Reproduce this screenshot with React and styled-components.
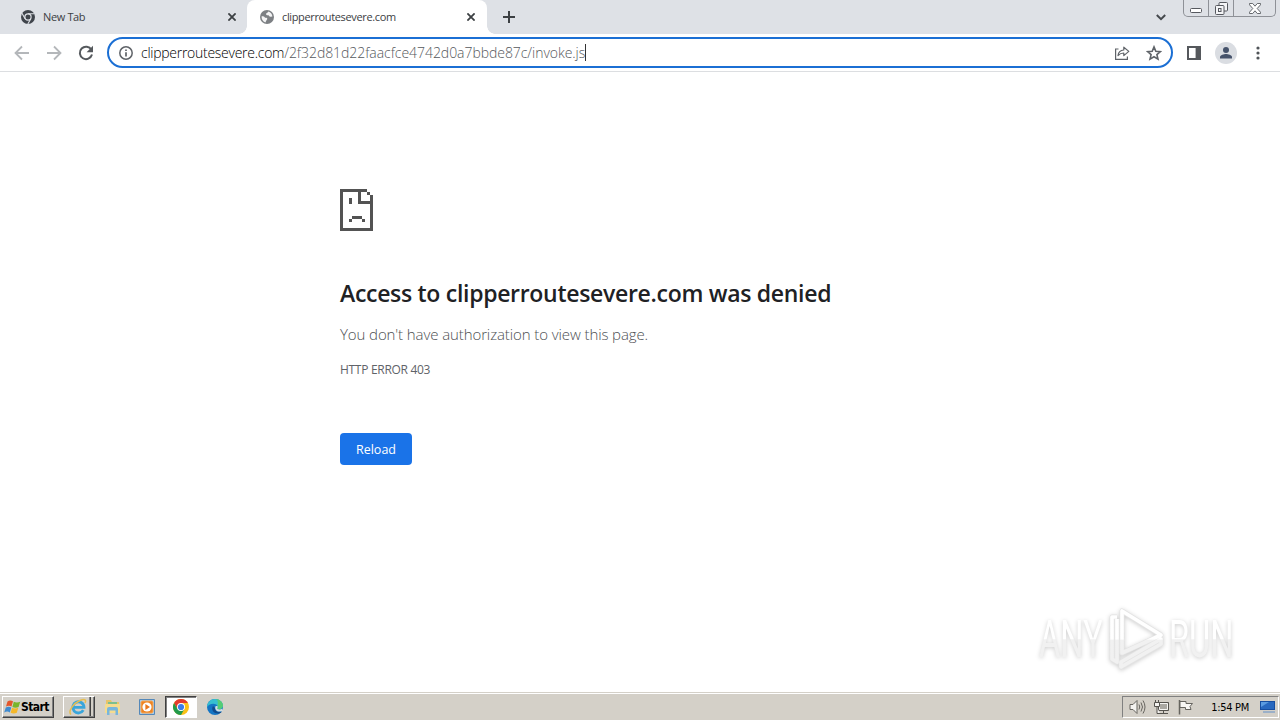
import React from 'react'
import styled, { createGlobalStyle } from 'styled-components'

const ui = `"Open Sans", "Noto Sans", sans-serif`

export default function App(){
  return(
    <Screen>
      <GlobalStyle />
      <TabStrip>
        <Tab>
          <ChromeMono />
          <TabTitle>New Tab</TabTitle>
          <CloseIcon />
        </Tab>
        <Tab $active>
          <GlobeIcon />
          <TabTitle>clipperroutesevere.com</TabTitle>
          <CloseIcon />
        </Tab>
        <NewTab>
          <svg width='12' height='12' viewBox='0 0 12 12' stroke='#3c4043' strokeWidth='2'><path d='M6 0v12M0 6h12' /></svg>
        </NewTab>
        <StripEnd>
          <svg width='10' height='7' viewBox='0 0 10 7' fill='none' stroke='#45494d' strokeWidth='2'><path d='M.8 1 5 5.2 9.2 1' /></svg>
          <WindowButtons />
        </StripEnd>
      </TabStrip>
      <Toolbar />
      <ErrorPage>
        <SadFile />
        <Title>Access to clipperroutesevere.com was denied</Title>
        <Summary>You don't have authorization to view this page.</Summary>
        <ErrorCode>HTTP ERROR 403</ErrorCode>
        <Reload>Reload</Reload>
        <Watermark />
      </ErrorPage>
      <Taskbar />
    </Screen>
  )
}

function Toolbar(){
  return(
    <ToolbarRow>
      <NavButtons>
        <svg width='16' height='16' viewBox='0 0 16 16' fill='none' stroke='#b4b7ba' strokeWidth='1.8'><path d='M15 8H2M8 1.5 1.5 8 8 14.5' /></svg>
        <svg width='16' height='16' viewBox='0 0 16 16' fill='none' stroke='#b4b7ba' strokeWidth='1.8'><path d='M1 8h13M8 1.5 14.5 8 8 14.5' /></svg>
        <svg width='16' height='16' viewBox='0 0 16 16' fill='none' stroke='#55595d' strokeWidth='2'>
          <path d='M13.4 4.8A6.2 6.2 0 1 0 14 9.6' />
          <path d='M15 .8v6.4H8.6z' fill='#55595d' stroke='none' />
        </svg>
      </NavButtons>
      <Omnibox>
        <svg width='14' height='14' viewBox='0 0 14 14' fill='none' stroke='#5f6368' strokeWidth='1.5'>
          <circle cx='7' cy='7' r='6.2' />
          <path d='M7 6.2v4.2M7 3.4v1.6' strokeWidth='1.7' />
        </svg>
        <Url><b>clipperroutesevere.com</b>/2f32d81d22faacfce4742d0a7bbde87c/invoke.js</Url>
        <Caret />
        <OmniboxActions>
          <svg width='16' height='14' viewBox='0 0 16 14' fill='none' stroke='#5f6368' strokeWidth='1.2'>
            <path d='M4.500 3H1.600v10.400h11.800V10.500' />
            <path d='M4 9.6C4.4 6 6.4 4.2 9.8 4V1.2l5 4.2-5 4.2V7C7.4 7 5.6 7.8 4 9.6z' strokeLinejoin='round' />
          </svg>
          <svg width='16' height='16' viewBox='0 0 16 16' fill='none' stroke='#5f6368' strokeWidth='1.6'>
            <path d='m8 1.9 1.8 4.3 4.6.4-3.5 3 1.1 4.6L8 11.8l-4 2.4 1.1-4.6-3.5-3 4.6-.4z' />
          </svg>
        </OmniboxActions>
      </Omnibox>
      <ToolbarActions>
        <svg width='14' height='14' viewBox='0 0 14 14'><path fill='#55585c' fillRule='evenodd' d='M0 0h14v14H0zM2 2v10h6.6V2z' /></svg>
        <Avatar>
          <svg width='12' height='12' viewBox='0 0 12 12' fill='#46536b'><circle cx='6' cy='3' r='3' /><path d='M0 11.6V10c0-2 4-3 6-3s6 1 6 3v1.6z' /></svg>
        </Avatar>
        <svg width='4' height='14' viewBox='0 0 4 14' fill='#505458'><circle cx='2' cy='2' r='1.6' /><circle cx='2' cy='7' r='1.6' /><circle cx='2' cy='12' r='1.6' /></svg>
      </ToolbarActions>
    </ToolbarRow>
  )
}

function ChromeMono(){
  return(
    <svg width='14' height='14' viewBox='0 0 14 14'>
      <circle cx='7' cy='7' r='7' fill='#3f444b' />
      <circle cx='7' cy='7' r='3.1' fill='#3f444b' stroke='#dee1e6' strokeWidth='1.2' />
      <path d='M7 3.7h6.4M4.1 8.7 1 3.2M9.8 8.8l-3 5.2' stroke='#dee1e6' strokeWidth='1.1' />
    </svg>
  )
}

function GlobeIcon(){
  return(
    <svg width='14' height='14' viewBox='0 0 14 14'>
      <circle cx='7' cy='7' r='7' fill='#7d8084' />
      <path d='M1.6 6.2c1.8 0 3 .4 3.4 1.6h1.600c1 .4.8 1.800 0 2.200l-1.200 2.400C2.8 11.6 1.3 9 1.6 6.2zM8.4 1.6c-.4 1.4-2 1-2.4 2.4 0 1 1.4 1.4 2.6 1.2.6 1.4 2 1.6 3.8 1.4C12.2 4 10.6 2.2 8.4 1.6z' fill='#f4f4f5' />
    </svg>
  )
}

function CloseIcon(){
  return <svg width='8' height='8' viewBox='0 0 8 8' stroke='#3c4043' strokeWidth='1.8'><path d='m.4.4 7.2 7.2M7.6.4.4 7.6' /></svg>
}

function WindowButtons(){
  return(
    <WindowGroup>
      <WindowButton $width='24px'>
        <svg width='12' height='5' viewBox='0 0 12 5'><rect x='.5' y='.5' width='11' height='4' rx='1' fill='#fff' stroke='#56595f' /></svg>
      </WindowButton>
      <WindowButton $width='25px'>
        <svg width='13' height='13' viewBox='0 0 13 13' fill='#f4f5f7' stroke='#56595f'>
          <rect x='4' y='.5' width='8.5' height='8.5' rx='1' />
          <rect x='.5' y='3.5' width='8.5' height='9' rx='1' />
          <rect x='3.5' y='6.5' width='2.5' height='3' />
        </svg>
      </WindowButton>
      <WindowButton $width='42px'>
        <svg width='12' height='11' viewBox='0 0 12 11'><path d='M.5.5h3.2L6 3.2 8.3.5h3.2v1.3L8.2 5.5l3.3 3.7v1.3H8.3L6 7.8 3.7 10.5H.5V9.2l3.3-3.7L.5 1.8z' fill='#fff' stroke='#56595f' strokeWidth='.9' /></svg>
      </WindowButton>
    </WindowGroup>
  )
}

function SadFile(){
  return(
    <svg width='33' height='42' viewBox='0 0 11 14' fill='#535353' shapeRendering='crispEdges'>
      <path d='M0 0h9v1H7v3h4v10H0zM1 1v12h9V5H6V1z' fillRule='evenodd' />
      <path d='M9 1h1v1H9zM10 2h1v3h-1zM3 3h1v2H3zM4 9h3.33v1H4zM3 10h1v1H3zM7.33 10h1v1h-1z' />
    </svg>
  )
}

function Watermark(){
  return(
    <WatermarkRow>
      <WatermarkWord>ANY</WatermarkWord>
      <svg width='62' height='64' viewBox='0 0 62 64' fill='none' strokeLinejoin='round'>
        <defs>
          <linearGradient id='fade' x1='0' y1='0' x2='0' y2='64' gradientUnits='userSpaceOnUse'>
            <stop offset='.5' stopColor='#fff' />
            <stop offset='.52' stopColor='#f1f1f1' />
          </linearGradient>
        </defs>
        <path d='M17 4v42L56 28zM12 10H7v42l5 3V12M16 55v5l40-23v-5z' stroke='#e4e4e4' strokeWidth='5' />
        <path d='M17 4v42L56 28zM12 10H7v42l5 3V12M16 55v5l40-23v-5z' stroke='url(#fade)' strokeWidth='3.6' />
      </svg>
      <WatermarkWord>RUN</WatermarkWord>
    </WatermarkRow>
  )
}

function Taskbar(){
  return(
    <TaskbarRow>
      <StartButton>
        <WindowsFlag />
        <span>Start</span>
      </StartButton>
      <StackedButton><IeIcon /></StackedButton>
      <TaskIcon><FolderIcon /></TaskIcon>
      <TaskIcon><PlayerIcon /></TaskIcon>
      <TaskIcon $pressed><ChromeIcon /></TaskIcon>
      <TaskIcon><EdgeIcon /></TaskIcon>
      <Tray>
        <svg width='17' height='16' viewBox='0 0 17 16' fill='none' stroke='#66645f'>
          <path d='M1 5.5h3L8 1.5v13l-4-4H1z' fill='#f4f3f0' />
          <path d='M10 5.5q1.5 2.5 0 5M12 3.5q3 4.5 0 9M14 1.5q4 6.5 0 13' />
        </svg>
        <svg width='17' height='16' viewBox='0 0 17 16' fill='none' stroke='#55534e'>
          <path d='M5.5 3.5h10v8h-10z' fill='#aaa8a2' />
          <path d='M6.5 4.5h8v6h-8z' stroke='#f5f5f2' />
          <path d='M7 14.5h8M10.5 12v2' />
          <path d='M1.5 3.5h5v4h-5zM2.5 1v2M5.5 1v2M4 8v6.5h3' fill='#f4f3f0' />
        </svg>
        <svg width='17' height='16' viewBox='0 0 17 16' stroke='#66645f'>
          <path d='M2.5 1v14.5' fill='none' strokeWidth='1.5' />
          <path d='M3 2.5h6v2h6.5L13 7.5l1 3H8.5v-2H3z' fill='#f8f7f4' />
        </svg>
        <Clock>1:54 PM</Clock>
        <svg width='16' height='14' viewBox='0 0 16 14'>
          <path d='M0 1h15v9H0z' fill='#174ea0' /><path d='M1 2h13v7H1z' fill='#2868bf' /><path d='M1 2h8L1 7z' fill='#5b9be0' />
          <path d='M3 11h12v2H3z' fill='#9bb0c8' />
        </svg>
      </Tray>
    </TaskbarRow>
  )
}

function WindowsFlag(){
  return(
    <svg width='17' height='16' viewBox='0 0 17 16'>
      <path d='M3.5 2.5Q6 .8 9 2.3L7.5 7.5Q5 6 2 7.5z' fill='#e4572c' />
      <path d='M9.8 2.7q3 1.5 6.4 0l-1.6 5.2q-3 1.5-6.2 0z' fill='#79b52c' />
      <path d='M1.8 8.4q3-1.5 5.5 0l-1.5 5q-2.5-1.6-5.6 0z' fill='#3f8bd0' />
      <path d='M8.1 8.8q3 1.5 6.2 0l-1.5 5q-3 1.6-6.2 0z' fill='#f5b82a' />
    </svg>
  )
}

function IeIcon(){
  return(
    <svg width='18' height='18' viewBox='0 0 18 18' fill='none'>
      <path d='M14.3 12.1A5.6 5.6 0 1 1 15 9.3H5' stroke='#39a5da' strokeWidth='2.8' />
      <path d='M2 16.5C-1.5 13 5 5 11 2.5c4-1.7 7-1.2 5 2.5' stroke='#e5bd50' strokeWidth='1.5' />
    </svg>
  )
}

function FolderIcon(){
  return(
    <svg width='16' height='17' viewBox='0 0 16 17'>
      <path d='M1 1h5l1 2h7v3H1z' fill='#e7c56a' />
      <path d='M3 3h9v3H3z' fill='#7dbf8e' />
      <path d='M0 5h15v9H0z' fill='#f5dc8f' />
      <path d='M2 16v-6q0-2 2-2h7q2 0 2 2v6h-2.5v-4.5h-6V16z' fill='#78b6dc' />
    </svg>
  )
}

function PlayerIcon(){
  return(
    <svg width='16' height='16' viewBox='0 0 16 16'>
      <path d='M.5.5h15v15H.5z' fill='#a6cbe8' stroke='#5488b9' />
      <path d='M3 2h10l1 1v10l-1 1H3l-1-1V3z' fill='#ee8422' stroke='#f3a85c' />
      <circle cx='8' cy='8' r='4.6' fill='#fff' />
      <path d='m6.4 5 4.6 3-4.6 3z' fill='#e8761c' />
    </svg>
  )
}

function ChromeIcon(){
  return(
    <svg width='16' height='16' viewBox='0 0 16 16'>
      <circle cx='8' cy='8' r='8' fill='#fbc116' />
      <path d='M1.07 4A8 8 0 0 1 14.93 4H8L4.54 10z' fill='#e33b2e' />
      <path d='M1.07 4A8 8 0 0 0 8 16l3.46-6H4.54z' fill='#229a4b' />
      <circle cx='8' cy='8' r='4' fill='#fff' /><circle cx='8' cy='8' r='3.1' fill='#3b7de8' />
    </svg>
  )
}

function EdgeIcon(){
  return(
    <svg width='16' height='16' viewBox='0 0 16 16'>
      <circle cx='8' cy='8' r='8' fill='#1475c4' />
      <path d='M0 8C.3 3.3 3.6 0 8 0c4.8 0 8 3.6 8 6.5S13 11 10.5 10c-1-.5.3-1 .2-2.3C10.5 4.5 3.5 3 0 8z' fill='#36bfd0' />
      <path d='M9 .1c4 .4 7 3.7 7 6.4S13 11 10.5 10c-1-.5.3-1 .2-2.3C10.4 6 12 2 9 .1z' fill='#55cc76' />
      <path d='M6 7c-2 3 0 7.5 5 7.5 1.5 0 3-.6 4-2-2 1-7 1-7-3.5z' fill='#114a8b' />
      <path d='M8.4 7.5c1-1 2.6-.4 2.3.6-.2 1-1 1.3-.2 1.9 1.4.8 3.5.5 4.7-.3L16 12l-3 .5c-3 .5-5.5-2-4.6-5z' fill='#d4dde0' />
    </svg>
  )
}

const GlobalStyle = createGlobalStyle`
  * { box-sizing: border-box; }
  body { margin: 0; overflow: hidden; background: #fff; }
  svg { display: block; flex: none; }
  `

const Screen = styled.div`
  width: 1280px;
  height: 720px;
  display: flex;
  flex-direction: column;
  font-family: ${ui};
  background: #fff;
  `

const TabStrip = styled.div`
  display: flex;
  height: 34px;
  flex: none;
  background: #dee1e6;
  padding-left: 7px;
  `

const Tab = styled.div`
  position: relative;
  display: flex;
  align-items: center;
  width: 240px;
  padding: ${p => p.$active ? '0 12px 0 13px' : '0 11px 0 14px'};
  border-radius: 8px 8px 0 0;
  background: ${p => p.$active ? '#fff' : 'transparent'};
  ${p => p.$active && `
    &::before, &::after {
      content: '';
      position: absolute;
      bottom: 0;
      width: 8px;
      height: 8px;
    }
    &::before { left: -8px; background: radial-gradient(circle at 0 0, transparent 7.5px, #fff 8px); }
    &::after { right: -8px; background: radial-gradient(circle at 100% 0, transparent 7.5px, #fff 8px); }
  `}
  `

const TabTitle = styled.span`
  flex: 1;
  margin-left: 8px;
  font-size: 11px;
  line-height: 16px;
  letter-spacing: -0.36px;
  color: #3c4043;
  white-space: nowrap;
  `

const NewTab = styled.div`
  display: flex;
  align-items: center;
  margin-left: 16px;
  `

const StripEnd = styled.div`
  display: flex;
  align-items: center;
  margin-left: auto;
  padding-right: 4px;
  gap: 17px;
  `

const WindowGroup = styled.div`
  display: flex;
  align-self: flex-start;
  height: 17px;
  border: 1px solid #8e9197;
  border-top: none;
  border-radius: 0 0 5px 5px;
  `

const WindowButton = styled.div`
  display: flex;
  align-items: center;
  justify-content: center;
  width: ${p => p.$width};
  & + & { border-left: 1px solid #8e9197; }
  &:first-child { padding-top: 5px; }
  `

const ToolbarRow = styled.div`
  display: flex;
  align-items: center;
  height: 38px;
  flex: none;
  padding-left: 14px;
  border-bottom: 1px solid #dcdee1;
  `

const NavButtons = styled.div`
  display: flex;
  flex: none;
  gap: 16px;
  width: 93px;
  `

const Omnibox = styled.div`
  display: flex;
  align-items: center;
  width: 1066px;
  flex: none;
  height: 31px;
  padding: 0 9px 0 10px;
  border: 2px solid #1b6fd4;
  border-radius: 16px;
  `

const Url = styled.span`
  margin-left: 8px;
  font-size: 14px;
  font-weight: 300;
  line-height: 20px;
  letter-spacing: -0.05px;
  color: #55585c;
  white-space: nowrap;
  b { font-weight: 300; letter-spacing: -0.27px; color: #000; }
  `

const Caret = styled.i`
  width: 1px;
  height: 17px;
  background: #333;
  `

const OmniboxActions = styled.div`
  display: flex;
  align-items: center;
  gap: 16px;
  margin-left: auto;
  `

const ToolbarActions = styled.div`
  display: flex;
  align-items: center;
  flex: none;
  margin-left: 14px;
  & > :last-child { margin-left: 19px; }
  `

const Avatar = styled.div`
  display: flex;
  align-items: center;
  justify-content: center;
  width: 22px;
  height: 22px;
  margin-left: 14px;
  border-radius: 50%;
  background: #dadde2;
  `

const ErrorPage = styled.main`
  position: relative;
  flex: 1;
  padding: 117px 0 0 340px;
  white-space: nowrap;
  `

const Title = styled.h1`
  margin: 46px 0 0;
  font-size: 23px;
  font-weight: 600;
  line-height: 32px;
  letter-spacing: -0.3px;
  color: #202124;
  `

const Summary = styled.p`
  margin: 15px 0 0;
  font-size: 15px;
  font-weight: 300;
  line-height: 20px;
  letter-spacing: -0.1px;
  color: #4d5053;
  `

const ErrorCode = styled.p`
  margin: 17px 0 0;
  font-size: 12px;
  line-height: 18px;
  letter-spacing: -0.3px;
  color: #5f6368;
  `

const Reload = styled.button`
  display: block;
  width: 72px;
  height: 32px;
  margin-top: 54px;
  padding: 0;
  border: none;
  border-radius: 4px;
  background: #1a73e8;
  color: #fff;
  font-family: ${ui};
  font-size: 12.5px;
  `

const WatermarkRow = styled.div`
  position: absolute;
  right: 47px;
  bottom: 20px;
  display: flex;
  align-items: center;
  justify-content: space-between;
  width: 194px;
  filter: drop-shadow(0 1px 2px rgba(0, 0, 0, 0.2));
  `

const WatermarkWord = styled.span`
  padding-top: 3px;
  font-family: Roboto, sans-serif;
  font-size: 51px;
  line-height: 64px;
  color: transparent;
  background: linear-gradient(#fff 50%, #f1f1f1 52%);
  background-clip: text;
  transform: scaleX(0.64);
  transform-origin: left;
  /* the glyphs are laid out wider than the box before scaling */
  &:first-child, &:last-child { width: 98px; margin-right: -34px; }
  `

const TaskbarRow = styled.footer`
  display: flex;
  align-items: flex-start;
  height: 28px;
  flex: none;
  padding: 3px 0 0 2px;
  border-top: 1px solid #d4d0c8;
  box-shadow: inset 0 1px #fff;
  background: #d4d0c8;
  `

const StartButton = styled.div`
  display: flex;
  align-items: center;
  width: 52px;
  height: 22px;
  padding-left: 1px;
  border: 1px solid;
  border-color: #fff #404040 #404040 #fff;
  box-shadow: inset -1px -1px #808080;
  font-family: "DejaVu Sans Condensed", "DejaVu Sans", sans-serif;
  font-size: 12px;
  font-weight: bold;
  letter-spacing: -0.6px;
  color: #000;
  `

const StackedButton = styled.div`
  display: flex;
  align-items: center;
  width: 32px;
  height: 22px;
  margin: 0 1px 0 9px;
  padding-left: 5px;
  border: 1px solid;
  border-color: #fff #404040 #404040 #fff;
  box-shadow: inset -1px -1px #808080, inset -3px 0 #d4d0c8, inset -4px 0 #404040, inset -5px 0 #808080;
  `

const TaskIcon = styled.div`
  display: flex;
  align-items: center;
  justify-content: center;
  width: 32px;
  height: 22px;
  margin-left: 1px;
  margin-right: 1px;
  ${p => p.$pressed && `
    background: #fff;
    border: 1px solid;
    border-color: #404040 #fff #fff #404040;
    box-shadow: inset 1px 1px #808080;
  `}
  `

const Tray = styled.div`
  display: flex;
  align-items: center;
  width: 157px;
  height: 22px;
  margin: 0 1px 0 auto;
  padding: 0 2px 0 6px;
  gap: 7px;
  border: 1px solid;
  border-color: #808080 #fff #fff #808080;
  `

const Clock = styled.span`
  margin: 0 0 0 auto;
  padding-right: 4px;
  font-family: "DejaVu Sans Condensed", "DejaVu Sans", sans-serif;
  font-size: 11px;
  letter-spacing: -0.3px;
  color: #000;
  white-space: nowrap;
  `
